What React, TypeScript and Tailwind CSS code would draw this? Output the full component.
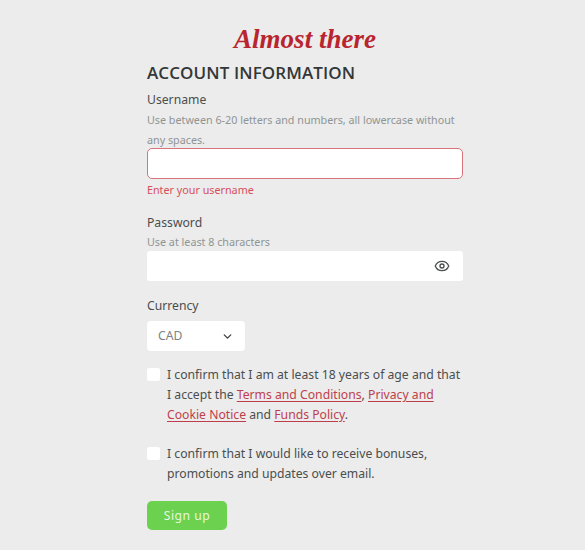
import { ChevronDown, Eye } from "lucide-react";

const sans = { fontFamily: '"Noto Sans", sans-serif' };

function Terms({ children, top }: { children: React.ReactNode; top: string }) {
  return (
    <label className={`flex items-start ${top}`}>
      <span className="mt-[3px] size-[13px] shrink-0 rounded-[2px] bg-white" />
      <span className="ml-[7px] text-[12.2px] leading-[20px] text-[#494e4e]">{children}</span>
    </label>
  );
}

function TermsLink({ children }: { children: React.ReactNode }) {
  return <a className="text-[#bd3f4b] underline underline-offset-2">{children}</a>;
}

export default function App() {
  return (
    <div className="h-[550px] w-[585px] overflow-hidden bg-[#ececec]" style={sans}>
      <div className="ml-[147px] w-[316px] pt-[21px]">
        <h1 className="text-center text-[27px] leading-[36px] font-bold text-[#b9252f] italic [font-family:'Liberation_Serif',serif]">
          Almost there
        </h1>
        <h2 className="mt-[5px] text-[17px] leading-[22px] font-semibold tracking-[0.1px] text-[#333737] [font-family:'Open_Sans',sans-serif]">
          ACCOUNT INFORMATION
        </h2>

        <p className="mt-[6px] text-[12.2px] leading-[20px] text-[#494e4e]">Username</p>
        <p className="text-[10.75px] leading-[20px] text-[#8f9494]">
          Use between 6-20 letters and numbers, all lowercase without any spaces.
        </p>
        <div className="mt-[-2px] h-[31px] rounded-[5px] border border-[#d9737c] bg-white" />
        <p className="mt-[2px] text-[10.75px] leading-[18px] text-[#d64f5a]">Enter your username</p>

        <p className="mt-[14px] text-[12.2px] leading-[20px] text-[#494e4e]">Password</p>
        <p className="mt-[-1px] text-[10.75px] leading-[20px] text-[#8f9494]">Use at least 8 characters</p>
        <div className="mt-[-1px] flex h-[30px] items-center justify-end rounded-[3px] bg-white pr-[13px]">
          <Eye className="size-[16px] text-[#4a4e4e]" strokeWidth={2} />
        </div>

        <p className="mt-[15px] text-[12.2px] leading-[20px] text-[#494e4e]">Currency</p>
        <div className="mt-[5px] flex h-[30px] w-[98px] items-center justify-between rounded-[4px] bg-white px-[11px]">
          <span className="text-[12.2px] text-[#7d8282]">CAD</span>
          <ChevronDown className="size-[13px] text-[#3f4343]" strokeWidth={2.5} />
        </div>

        <Terms top="mt-[14px]">
          I confirm that I am at least 18 years of age and that I accept the{" "}
          <TermsLink>Terms and Conditions</TermsLink>, <TermsLink>Privacy and Cookie Notice</TermsLink> and{" "}
          <TermsLink>Funds Policy</TermsLink>.
        </Terms>
        <Terms top="mt-[19px]">
          I confirm that I would like to receive bonuses, promotions and updates over email.
        </Terms>

        <button
          type="button"
          className="mt-[17px] block h-[29px] w-[80px] rounded-[5px] bg-[#6cd14f] pt-[2px] text-[12.2px] tracking-[0.5px] text-[#e6f8df]"
        >
          Sign up
        </button>
      </div>
    </div>
  );
}
